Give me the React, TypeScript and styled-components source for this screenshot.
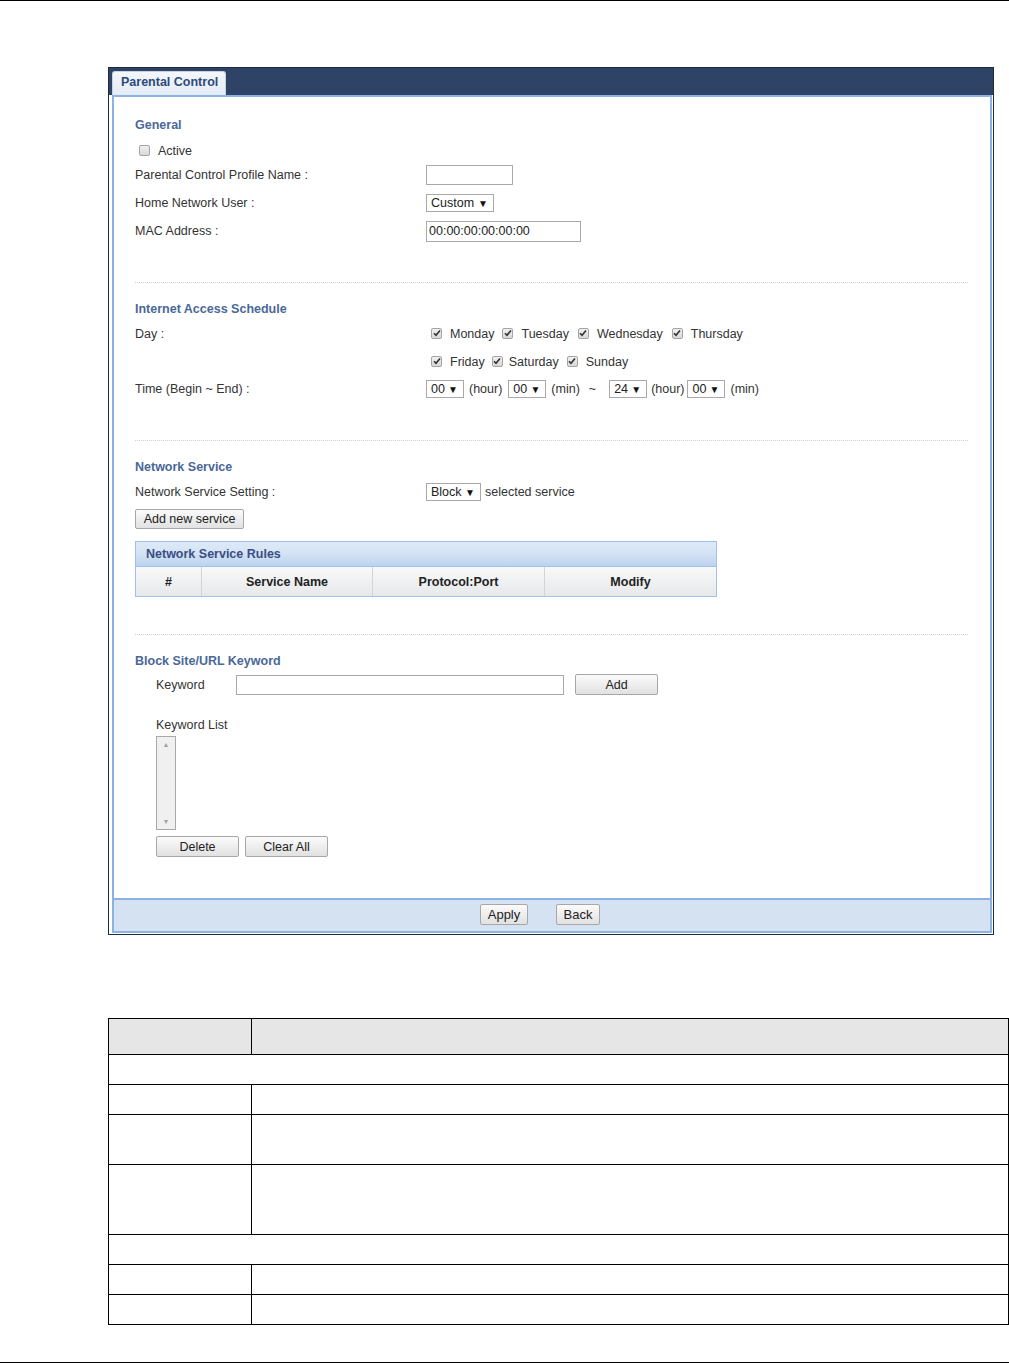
import React from "react";
import styled, { createGlobalStyle } from "styled-components";

const Global = createGlobalStyle`
  html, body { margin: 0; padding: 0; background: #fff; }
  body { font-family: "Liberation Sans", Arial, sans-serif; font-size: 12.5px; color: #333; }
`;

const Page = styled.div`
  width: 1009px;
  height: 1364px;
  position: relative;
  border-top: 1px solid #000;
  box-sizing: border-box;
  display: flex;
  flex-direction: column;
`;

const Frame = styled.div`
  margin: 66px 0 0 108px;
  width: 886px;
  height: 868px;
  box-sizing: border-box;
  border: 1px solid #1d2a40;
  background: #fff;
  display: flex;
  flex-direction: column;
`;

const TitleBar = styled.div`
  height: 27px;
  background: #2f4367;
  display: flex;
  align-items: flex-end;
  padding-left: 3px;
  flex-shrink: 0;
`;

const Tab = styled.div`
  height: 24px;
  width: 114px;
  box-sizing: border-box;
  background: linear-gradient(#f4f7fb, #e3ebf5);
  border: 1px solid #c9d3df;
  border-bottom: none;
  border-radius: 3px 3px 0 0;
  color: #2d4a7c;
  font-weight: bold;
  font-size: 12.5px;
  display: flex;
  align-items: center;
  padding: 0 0 4px 8px;
`;

const Panel = styled.div`
  flex: 1;
  margin: 0 1px 1px 3px;
  border: 2px solid #8cb2e2;
  display: flex;
  flex-direction: column;
`;

const Content = styled.div`
  flex: 1;
  padding: 20px 22px 0 21px;
  display: flex;
  flex-direction: column;
`;

const Heading = styled.div<{ $mt?: number }>`
  color: #4a6899;
  font-weight: bold;
  line-height: 16px;
  height: 16px;
  margin-top: ${(p) => p.$mt ?? 0}px;
`;

const Row = styled.div<{ $h: number; $mt: number; $indent?: number }>`
  height: ${(p) => p.$h}px;
  margin-top: ${(p) => p.$mt}px;
  padding-left: ${(p) => p.$indent ?? 0}px;
  display: flex;
  align-items: center;
`;

const Label = styled.div<{ $w?: number }>`
  width: ${(p) => p.$w ?? 291}px;
  flex-shrink: 0;
`;

const Divider = styled.div<{ $mt: number }>`
  margin-top: ${(p) => p.$mt}px;
  border-top: 1px dotted #cfcfcf;
`;

const TextBox = styled.div<{ $w: number; $h?: number }>`
  width: ${(p) => p.$w}px;
  height: ${(p) => p.$h ?? 20}px;
  box-sizing: border-box;
  border: 1px solid #a9a9a9;
  background: #fff;
  display: flex;
  align-items: center;
  padding-left: 2px;
  color: #222;
`;

const Select = styled.div<{ $w: number }>`
  width: ${(p) => p.$w}px;
  height: 18px;
  box-sizing: border-box;
  border: 1px solid #a9a9a9;
  background: #fff;
  display: inline-flex;
  align-items: center;
  justify-content: space-between;
  padding: 0 5px 0 4px;
  color: #222;
  flex-shrink: 0;
`;

const Arrow = styled.span`
  font-size: 10px;
  color: #111;
`;

const Check = styled.span<{ $ml?: number }>`
  width: 11px;
  height: 11px;
  box-sizing: border-box;
  border: 1px solid #a4a4a4;
  border-radius: 2px;
  background: linear-gradient(#f0f0f0, #d9d9d9);
  display: inline-flex;
  align-items: center;
  justify-content: center;
  margin-left: ${(p) => p.$ml ?? 0}px;
  margin-bottom: 2px;
  flex-shrink: 0;
  color: #333;
`;

const CheckLabel = styled.span<{ $gap?: number; $after?: number }>`
  margin-left: ${(p) => p.$gap ?? 8}px;
  margin-right: ${(p) => p.$after ?? 8}px;
`;

const Unit = styled.span<{ $ml?: number; $mr?: number }>`
  margin-left: ${(p) => p.$ml ?? 5}px;
  margin-right: ${(p) => p.$mr ?? 6}px;
  color: #333;
`;

const Button = styled.button<{ $w: number; $h?: number; $ml?: number }>`
  width: ${(p) => p.$w}px;
  height: ${(p) => p.$h ?? 21}px;
  margin-left: ${(p) => p.$ml ?? 0}px;
  box-sizing: border-box;
  border: 1px solid #a7a7a7;
  border-radius: 2px;
  background: linear-gradient(#fbfbfb, #e1e1e1);
  font-family: "Liberation Sans", Arial, sans-serif;
  font-size: 12.5px;
  color: #222;
  padding: 0;
  flex-shrink: 0;
`;

const RulesTable = styled.div`
  margin-top: 12px;
  width: 582px;
  height: 56px;
  box-sizing: border-box;
  border: 1px solid #9fc1ea;
  display: flex;
  flex-direction: column;
`;

const RulesTitle = styled.div`
  height: 25px;
  box-sizing: border-box;
  background: linear-gradient(#dde9f7 0%, #d3e2f4 50%, #bcd3ef 100%);
  border-bottom: 1px solid #9fc1ea;
  color: #3b4d85;
  font-weight: bold;
  display: flex;
  align-items: center;
  padding-left: 10px;
`;

const RulesHead = styled.div`
  flex: 1;
  display: grid;
  grid-template-columns: 66px 171px 172px 1fr;
  background: linear-gradient(#f9f9f9, #e6e8eb);
`;

const HeadCell = styled.div<{ $last?: boolean }>`
  display: flex;
  align-items: center;
  justify-content: center;
  font-weight: bold;
  color: #222;
  border-right: ${(p) => (p.$last ? "none" : "1px solid #d4d4d4")};
`;

const ListBox = styled.div`
  width: 20px;
  height: 94px;
  box-sizing: border-box;
  border: 1px solid #a9a9a9;
  background: #f0f0f0;
  display: flex;
  flex-direction: column;
  justify-content: space-between;
  align-items: center;
  padding: 4px 0;
  color: #a3a3a3;
  font-size: 7px;
`;

const Footer = styled.div`
  height: 33px;
  flex-shrink: 0;
  box-sizing: border-box;
  border-top: 2px solid #8cb2e2;
  background: #d5e2f2;
  display: flex;
  align-items: center;
  justify-content: center;
  gap: 28px;
  padding: 0 24px 2px 0;
`;

const FooterButton = styled(Button)`
  font-family: "Liberation Sans Narrow", "Liberation Sans", Arial, sans-serif;
  font-size: 13px;
`;

const DocTable = styled.div`
  margin: 83px 0 0 108px;
  width: 901px;
  box-sizing: border-box;
  border-top: 1.5px solid #000;
  border-left: 1.5px solid #000;
  display: grid;
  grid-template-columns: 143px 1fr;
`;

const DocCell = styled.div<{ $h: number; $span?: boolean; $head?: boolean }>`
  height: ${(p) => p.$h}px;
  box-sizing: border-box;
  grid-column: ${(p) => (p.$span ? "1 / span 2" : "auto")};
  border-right: 1.5px solid #000;
  border-bottom: 1.5px solid #000;
  background: ${(p) => (p.$head ? "#e6e6e6" : "#fff")};
`;

const BottomRule = styled.div`
  position: absolute;
  left: 0;
  right: 0;
  top: 1361px;
  border-top: 1.5px solid #000;
`;

const Tick = () => (
  <svg width="8" height="8" viewBox="0 0 8 8">
    <path d="M1 4.2 L3 6.3 L7 1.4" fill="none" stroke="#333" strokeWidth="1.6" />
  </svg>
);

const Day = ({ name, ml, gap, after }: { name: string; ml?: number; gap?: number; after?: number }) => (
  <>
    <Check $ml={ml}>
      <Tick />
    </Check>
    <CheckLabel $gap={gap} $after={after}>
      {name}
    </CheckLabel>
  </>
);

const Sel = ({ v, w }: { v: string; w: number }) => (
  <Select $w={w}>
    <span>{v}</span>
    <Arrow>▼</Arrow>
  </Select>
);

export default function App() {
  const docRows: { h: number; span?: boolean; head?: boolean }[] = [
    { h: 36, head: true },
    { h: 30, span: true },
    { h: 30 },
    { h: 50 },
    { h: 70 },
    { h: 30, span: true },
    { h: 30 },
    { h: 30 },
  ];
  return (
    <>
      <Global />
      <Page>
        <Frame>
          <TitleBar>
            <Tab>Parental Control</Tab>
          </TitleBar>
          <Panel>
            <Content>
              <Heading>General</Heading>
              <Row $h={16} $mt={10} $indent={4}>
                <Check />
                <CheckLabel $gap={8}>Active</CheckLabel>
              </Row>
              <Row $h={28} $mt={2}>
                <Label>Parental Control Profile Name :</Label>
                <TextBox $w={87} />
              </Row>
              <Row $h={28} $mt={0}>
                <Label>Home Network User :</Label>
                <Sel v="Custom" w={68} />
              </Row>
              <Row $h={28} $mt={0}>
                <Label>MAC Address :</Label>
                <TextBox $w={155} $h={21}>00:00:00:00:00:00</TextBox>
              </Row>

              <Divider $mt={37} />

              <Heading $mt={18}>Internet Access Schedule</Heading>
              <Row $h={20} $mt={7}>
                <Label>Day :</Label>
                <Day name="Monday" ml={5} />
                <Day name="Tuesday" after={9} />
                <Day name="Wednesday" after={9} />
                <Day name="Thursday" />
              </Row>
              <Row $h={20} $mt={8}>
                <Label />
                <Day name="Friday" ml={5} after={7} />
                <Day name="Saturday" gap={6} after={8} />
                <Day name="Sunday" />
              </Row>
              <Row $h={24} $mt={5}>
                <Label>Time (Begin ~ End) :</Label>
                <Sel v="00" w={38} />
                <Unit>(hour)</Unit>
                <Sel v="00" w={38} />
                <Unit>(min)</Unit>
                <Unit $ml={3} $mr={13}>~</Unit>
                <Sel v="24" w={38} />
                <Unit $ml={4} $mr={3}>(hour)</Unit>
                <Sel v="00" w={38} />
                <Unit>(min)</Unit>
              </Row>

              <Divider $mt={39} />

              <Heading $mt={18}>Network Service</Heading>
              <Row $h={20} $mt={7}>
                <Label>Network Service Setting :</Label>
                <Sel v="Block" w={55} />
                <Unit $ml={4}>selected service</Unit>
              </Row>
              <Row $h={20} $mt={7}>
                <Button $w={109} $h={20}>Add new service</Button>
              </Row>
              <RulesTable>
                <RulesTitle>Network Service Rules</RulesTitle>
                <RulesHead>
                  <HeadCell>#</HeadCell>
                  <HeadCell>Service Name</HeadCell>
                  <HeadCell>Protocol:Port</HeadCell>
                  <HeadCell $last>Modify</HeadCell>
                </RulesHead>
              </RulesTable>

              <Divider $mt={37} />

              <Heading $mt={18}>Block Site/URL Keyword</Heading>
              <Row $h={21} $mt={5} $indent={21}>
                <Label $w={80}>Keyword</Label>
                <TextBox $w={328} />
                <Button $w={83} $ml={11}>Add</Button>
              </Row>
              <Row $h={16} $mt={22} $indent={21}>
                Keyword List
              </Row>
              <Row $h={94} $mt={3} $indent={21}>
                <ListBox>
                  <span>▲</span>
                  <span>▼</span>
                </ListBox>
              </Row>
              <Row $h={21} $mt={6} $indent={21}>
                <Button $w={83}>Delete</Button>
                <Button $w={83} $ml={6}>Clear All</Button>
              </Row>
            </Content>
            <Footer>
              <FooterButton $w={48}>Apply</FooterButton>
              <FooterButton $w={44}>Back</FooterButton>
            </Footer>
          </Panel>
        </Frame>

        <DocTable>
          {docRows.map((r, i) =>
            r.span ? (
              <DocCell key={i} $h={r.h} $span />
            ) : (
              <React.Fragment key={i}>
                <DocCell $h={r.h} $head={r.head} />
                <DocCell $h={r.h} $head={r.head} />
              </React.Fragment>
            )
          )}
        </DocTable>
        <BottomRule />
      </Page>
    </>
  );
}
